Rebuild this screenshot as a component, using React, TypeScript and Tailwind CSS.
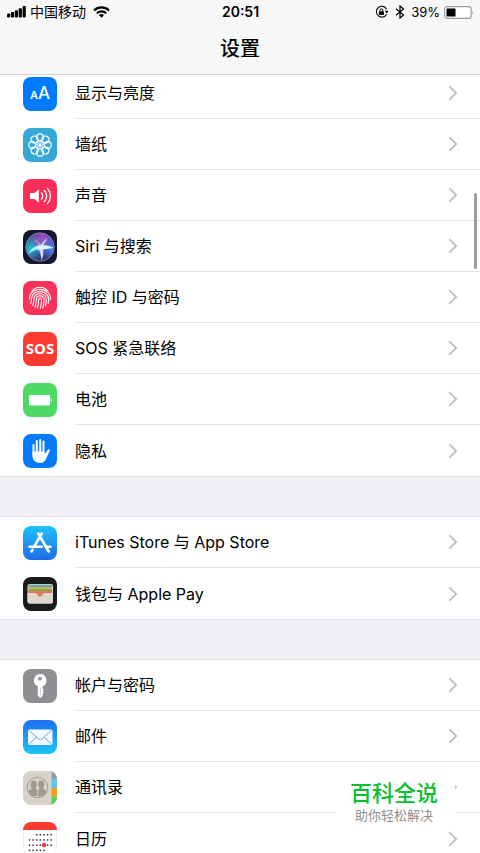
import clsx from "clsx";
import { ReactNode } from "react";

interface SettingItem {
  id: string;
  label: string;
  icon: ReactNode;
}

const tile = "h-[34px] w-[34px] shrink-0 overflow-hidden rounded-lg";

/* ---------- Row icons, all drawn on a 34 x 34 tile ---------- */

function DisplayIcon() {
  return (
    <span
      className={clsx(
        tile,
        "flex items-baseline justify-center bg-[#007aff] leading-8 text-white"
      )}>
      <span className="text-[11px] font-semibold">A</span>
      <span className="text-[17px] font-medium">A</span>
    </span>
  );
}

function WallpaperIcon() {
  const petals = [0, 45, 90, 135, 180, 225, 270, 315];
  return (
    <svg viewBox="0 0 34 34" className={clsx(tile, "bg-[#36a8d6]")} aria-hidden>
      <g fill="none" stroke="#fff">
        {petals.map((deg) => (
          <circle
            key={deg}
            cx="17"
            cy="9.3"
            r="3.5"
            strokeWidth="1.3"
            transform={`rotate(${deg} 17 17)`}
          />
        ))}
        {petals.map((deg) => (
          <path
            key={deg}
            d="M17 15.500V13"
            strokeWidth="1"
            transform={`rotate(${deg} 17 17)`}
          />
        ))}
      </g>
      <circle cx="17" cy="17" r="1.500" fill="#fff" />
    </svg>
  );
}

function SoundIcon() {
  return (
    <svg viewBox="0 0 34 34" className={clsx(tile, "bg-[#fc2d57]")} aria-hidden>
      <path d="M7 14h4.2l4.6-3.6v13.2L11.2 20H7z" fill="#fff" />
      <g fill="none" stroke="#fff" strokeWidth="1.3" strokeLinecap="round">
        <path d="M18.5 13.8c1.5 2 1.5 4.4 0 6.4" />
        <path d="M21.4 11.5c2.7 3.4 2.7 7.6 0 11" />
        <path d="M24.4 9.3c3.9 4.8 3.9 10.6 0 15.4" />
      </g>
    </svg>
  );
}

function SiriIcon() {
  return (
    <svg viewBox="0 0 34 34" className={clsx(tile, "bg-[#15162f]")} aria-hidden>
      <defs>
        <radialGradient id="siri-top" cx="0.6" cy="0.2" r="0.6">
          <stop offset="0" stopColor="#b04fd0" />
          <stop offset="1" stopColor="#b04fd0" stopOpacity="0" />
        </radialGradient>
        <radialGradient id="siri-left" cx="0.15" cy="0.55" r="0.55">
          <stop offset="0" stopColor="#22c4d8" />
          <stop offset="1" stopColor="#22c4d8" stopOpacity="0" />
        </radialGradient>
        <radialGradient id="siri-right" cx="0.9" cy="0.55" r="0.5">
          <stop offset="0" stopColor="#4484ee" />
          <stop offset="1" stopColor="#4484ee" stopOpacity="0" />
        </radialGradient>
        <radialGradient id="siri-core">
          <stop offset="0" stopColor="#fff" />
          <stop offset="1" stopColor="#9ff0ff" stopOpacity="0" />
        </radialGradient>
      </defs>
      <circle cx="17" cy="17" r="14" fill="#33276b" />
      <circle cx="17" cy="17" r="14" fill="url(#siri-top)" />
      <circle cx="17" cy="17" r="14" fill="url(#siri-left)" />
      <circle cx="17" cy="17" r="14" fill="url(#siri-right)" />
      <path d="M17.500 18.500L10.500 9Q17 10.500 19 17Z" fill="#e868cc" opacity="0.7" />
      <path d="M18 19Q9.500 19.500 4.500 25Q9 15.500 17 15.500Z" fill="#a5f5f5" />
      <path d="M16 16.500Q24 13.500 30.500 18Q23 19 17 20Z" fill="#e4f1ff" />
      <path d="M15.500 17Q17.500 22 18.500 30.500Q22 23 19 17Z" fill="#e0d2ff" />
      <path d="M17 17.500Q20 10 24.500 8.500Q21 13 19 18.500Z" fill="#fff" opacity="0.7" />
      <circle cx="17.500" cy="17.600" r="5" fill="url(#siri-core)" />
      <circle cx="17" cy="17" r="14.2" fill="none" stroke="#8b8cb0" strokeWidth="0.9" />
    </svg>
  );
}

function TouchIdIcon() {
  return (
    <svg viewBox="0 0 34 34" className={clsx(tile, "bg-[#fb3159]")} aria-hidden>
      <g fill="none" stroke="#fff" strokeWidth="1.1" strokeLinecap="round">
        <path d="M9 10.2C13.2 5 20.8 5 25 10.2" />
        <path d="M6.6 18.2C6.2 11.6 11 8.4 17 8.4s10.8 3.8 10.4 10.4" />
        <path d="M7.8 22.4c.8-2.2.7-3.4.8-5.2C9 12.800 12.600 10.600 17 10.600s8.300 2.800 8.500 7.200c.1 1.400 0 3-.3 4.600" />
        <path d="M9.800 24.600c1-2.600 1-4.600 1.100-7C11.200 14.400 13.800 12.800 17 12.800s6 2 6.200 5.200c.1 2.200-.1 4.400-.7 6.800" />
        <path d="M12 26.200c1-2.800 1.200-5.600 1.300-8.200.1-2 1.700-3.100 3.700-3.100s3.800 1.200 3.900 3.300c.1 2.800-.2 5.600-1 8.600" />
        <path d="M14.400 27.200c1-3 1.300-6 1.300-8.800 0-1.800 2.800-1.900 2.800 0 0 3-.3 6-1.200 9" />
      </g>
    </svg>
  );
}

function SosIcon() {
  return (
    <span
      className={clsx(
        tile,
        "flex items-center justify-center bg-[#fc3b30] font-['Noto_Sans',sans-serif] text-[15px] font-bold text-white"
      )}>
      SOS
    </span>
  );
}

function BatteryTileIcon() {
  return (
    <svg viewBox="0 0 34 34" className={clsx(tile, "bg-[#4cd964]")} aria-hidden>
      <rect x="6" y="12" width="21" height="10.500" rx="1" fill="#fff" />
      <path d="M27.800 15.200q2.200 2 0 4z" fill="#fff" />
    </svg>
  );
}

function PrivacyIcon() {
  return (
    <svg viewBox="0 0 34 34" className={clsx(tile, "bg-[#047bfb]")} aria-hidden>
      <g stroke="#fff" strokeWidth="2" strokeLinecap="round">
        <path d="M10.500 11v10" />
        <path d="M13.800 7v12" />
        <path d="M17.200 6v12" />
        <path d="M20.500 7.500v12" />
      </g>
      <path
        d="M9.500 17.500h12v3l3.300-4.600c.8-1 2.500-.6 1.900.8l-3.700 8.200c-1 2.300-2.900 4-5.800 4-4.400 0-7.700-2.600-7.700-7.400z"
        fill="#fff"
      />
    </svg>
  );
}

function AppStoreIcon() {
  return (
    <svg viewBox="0 0 34 34" className={tile} aria-hidden>
      <defs>
        <linearGradient id="store-bg" x1="0" y1="0" x2="0" y2="1">
          <stop offset="0" stopColor="#1fc4fa" />
          <stop offset="1" stopColor="#1f6be8" />
        </linearGradient>
      </defs>
      <rect width="34" height="34" fill="url(#store-bg)" />
      <g stroke="#fff" strokeWidth="2.600" strokeLinecap="round">
        <path d="M18.700 7.500L11.300 20.300" />
        <path d="M15.300 7.500L25.700 25.500" />
        <path d="M6.500 20.800h12.300" />
        <path d="M23.500 20.800h4" />
        <path d="M9.500 23.800l-1 1.700" />
      </g>
    </svg>
  );
}

function WalletIcon() {
  return (
    <svg viewBox="0 0 34 34" className={clsx(tile, "bg-[#1b1b1d]")} aria-hidden>
      <rect x="4.500" y="7" width="25.500" height="19.500" rx="2" fill="#ddd8cb" />
      <path d="M5.500 8.500q0-.7.7-.7h22.100q.7 0 .7.700V11h-23.500z" fill="#5fa9b5" />
      <path d="M5.500 10.300h23.500v2.700h-23.500z" fill="#e0b339" />
      <path d="M5.500 12h23.500v2.500h-23.500z" fill="#77ad4c" />
      <path d="M5.500 14h23.500v6h-23.500z" fill="#e0765e" />
      <path
        d="M4.500 16h7.300c1.500 0 1.900.7 2.500 1.700 1.300 2.300 4.100 2.300 5.400 0 .6-1 1-1.700 2.500-1.700H30v8.500q0 2-2 2H6.500q-2 0-2-2z"
        fill="#ddd8cb"
      />
    </svg>
  );
}

function KeyIcon() {
  return (
    <svg viewBox="0 0 34 34" className={clsx(tile, "bg-[#8e8e93]")} aria-hidden>
      <path
        fillRule="evenodd"
        fill="#fff"
        d="M17 5a6.500 6.500 0 0 1 2.600 12.400v2.100l1.300 1.300-1.300 1.400 1.300 1.500-1.300 1.400v1.700L17.500 29l-2.700-2.300v-9.300A6.500 6.500 0 0 1 17 5zm0 2.800a1.900 1.900 0 1 0 0 3.800 1.900 1.900 0 0 0 0-3.800z"
      />
      <path d="M17.300 18.500v8" stroke="#b9b9bd" strokeWidth="0.700" />
    </svg>
  );
}

function MailIcon() {
  return (
    <svg viewBox="0 0 34 34" className={tile} aria-hidden>
      <defs>
        <linearGradient id="mail-bg" x1="0" y1="0" x2="0" y2="1">
          <stop offset="0" stopColor="#1d6ff0" />
          <stop offset="1" stopColor="#1bc6fb" />
        </linearGradient>
      </defs>
      <rect width="34" height="34" fill="url(#mail-bg)" />
      <rect x="5" y="9.500" width="24.500" height="15.500" rx="1.500" fill="#f2fafe" />
      <g fill="none" stroke="#6da4cf" strokeWidth="1">
        <path d="M5.800 10.300l9.700 8.700q1.800 1.400 3.500 0l9.700-8.700" />
        <path d="M6 24.300l7.300-7.100M28.600 24.300l-7.300-7.100" />
      </g>
    </svg>
  );
}

function ContactsIcon() {
  return (
    <svg viewBox="0 0 34 34" className={clsx(tile, "bg-[#d6d2c8]")} aria-hidden>
      <path d="M29 0h5v8h-5z" fill="#9b9b9b" />
      <path d="M29 8h5v9h-5z" fill="#5ac5f0" />
      <path d="M29 17h5v8.500h-5z" fill="#f89a1c" />
      <path d="M29 25.500h5V34h-5z" fill="#55cf50" />
      <path d="M28.500 0v34" stroke="#bcb8ae" strokeWidth="1" />
      <circle cx="14.500" cy="16.500" r="10.300" fill="none" stroke="#9f9b93" strokeWidth="1" />
      <g fill="#9f9b93">
        <path d="M10.800 9.500c2.200 0 3.200 1.700 3 4-.1 1.500-.6 2.600-1.200 3.300 0 1.600 2.300 1.700 2.600 3.700v4.500H9.500c-2-1-3.500-2.500-4.200-4.700 1-1.200 3.500-1.500 3.600-3.300-.8-.8-1.200-2-1.200-3.600 0-2.200 1-3.900 3.100-3.900z" />
        <path d="M18.200 9.500c-2.200 0-3.200 1.700-3 4 .1 1.500.6 2.600 1.200 3.300 0 1.600-1.300 1.700-1.100 3.700l-.5 5.200c3.800 0 7-1.500 8.900-5.400-1-1.200-3.400-1.500-3.600-3.300.8-.8 1.200-2 1.200-3.600 0-2.200-1-3.900-3.100-3.900z" />
      </g>
      <path d="M14.700 17.500v7.500" stroke="#d6d2c8" strokeWidth="0.800" />
    </svg>
  );
}

function CalendarIcon() {
  // [first column, last column] of the dots on each line
  const lines = [
    [2, 6],
    [0, 6],
    [0, 6],
    [0, 4],
  ];
  return (
    <svg viewBox="0 0 34 34" className={clsx(tile, "bg-white")} aria-hidden>
      <rect x="0.500" y="0.500" width="33" height="33" rx="7.500" fill="#fff" stroke="#eeeeee" />
      <path d="M0 0h34v8H0z" fill="#fb3b30" />
      {lines.map(([from, to], row) =>
        Array.from({ length: to - from + 1 }, (_, i) => (
          <rect
            key={`${row}-${i}`}
            x={5.800 + (from + i) * 3.600}
            y={12 + row * 5.200}
            width="1.500"
            height="1.500"
            fill="#333"
          />
        ))
      )}
      <circle cx="21" cy="23" r="2.200" fill="#f5333f" />
    </svg>
  );
}

/* ---------- Data ---------- */

const groups: SettingItem[][] = [
  [
    { id: "display", label: "显示与亮度", icon: <DisplayIcon /> },
    { id: "wallpaper", label: "墙纸", icon: <WallpaperIcon /> },
    { id: "sounds", label: "声音", icon: <SoundIcon /> },
    { id: "siri", label: "Siri 与搜索", icon: <SiriIcon /> },
    { id: "touch-id", label: "触控 ID 与密码", icon: <TouchIdIcon /> },
    { id: "sos", label: "SOS 紧急联络", icon: <SosIcon /> },
    { id: "battery", label: "电池", icon: <BatteryTileIcon /> },
    { id: "privacy", label: "隐私", icon: <PrivacyIcon /> },
  ],
  [
    { id: "store", label: "iTunes Store 与 App Store", icon: <AppStoreIcon /> },
    { id: "wallet", label: "钱包与 Apple Pay", icon: <WalletIcon /> },
  ],
  [
    { id: "accounts", label: "帐户与密码", icon: <KeyIcon /> },
    { id: "mail", label: "邮件", icon: <MailIcon /> },
    { id: "contacts", label: "通讯录", icon: <ContactsIcon /> },
    { id: "calendar", label: "日历", icon: <CalendarIcon /> },
  ],
];

/* ---------- Layout pieces ---------- */

function StatusBar() {
  return (
    <div className="grid h-6 grid-cols-[1fr_auto_1fr] items-center pl-[7px] pr-1.5 text-sm leading-6">
      <div className="flex items-center">
        <svg width="19" height="12" viewBox="0 0 19 12" aria-hidden>
          <rect x="0" y="7.500" width="3.200" height="4" rx="1" />
          <rect x="3.900" y="6" width="3.200" height="5.500" rx="1" />
          <rect x="7.800" y="4.200" width="3.200" height="7.300" rx="1" />
          <rect x="11.700" y="2.200" width="3.200" height="9.300" rx="1" />
          <rect x="15.600" y="0" width="3.200" height="11.500" rx="1" />
        </svg>
        <span className="ml-1">中国移动</span>
        <svg className="ml-[7px]" width="17" height="12" viewBox="0 0 17 12" aria-hidden>
          <path d="M8.500 11.800L5.900 9.100a3.800 3.800 0 0 1 5.200 0z" />
          <g fill="none" stroke="#000" strokeWidth="2.100">
            <path d="M3.800 7.300a6.800 6.800 0 0 1 9.400 0" />
            <path d="M1 4.400a10.800 10.800 0 0 1 15 0" />
          </g>
        </svg>
      </div>
      <span className="font-semibold">20:51</span>
      <div className="flex items-center justify-end">
        <svg width="14" height="14" viewBox="0 0 14 14" aria-hidden>
          <path
            d="M11.600 4.200A5.400 5.400 0 1 0 11.600 9.200"
            fill="none"
            stroke="#000"
            strokeWidth="1.100"
          />
          <path d="M9.800 5.800h3.900l-2 2.800z" />
          <rect x="3.900" y="6.200" width="5" height="3.800" rx="0.500" />
          <path d="M5 6.400V5.200a1.400 1.400 0 0 1 2.800 0v1.200" fill="none" stroke="#000" />
        </svg>
        <svg className="ml-1.5" width="10" height="14" viewBox="0 0 10 14" aria-hidden>
          <path
            d="M1 3.800l7.500 6.200L5 13V1l3.500 3L1 10.200"
            fill="none"
            stroke="#000"
            strokeWidth="1.200"
          />
        </svg>
        <span className="ml-1.5 text-[13px]">39%</span>
        <svg className="ml-1" width="30" height="13" viewBox="0 0 30 13" aria-hidden>
          <rect x="0.600" y="0.600" width="26.500" height="11.800" rx="2.500" fill="#fff" stroke="#9b9b9b" strokeWidth="1.200" />
          <rect x="2.500" y="2.500" width="9" height="8" rx="0.500" />
          <path d="M28.300 4.500q1.500 2 0 4z" fill="#9b9b9b" />
        </svg>
      </div>
    </div>
  );
}

function SettingRow({ item, last }: { item: SettingItem; last: boolean }) {
  return (
    <li>
      <a href={`#${item.id}`} className="flex h-[51px] items-stretch pl-[23px]">
        <span className="flex items-center">{item.icon}</span>
        <span
          className={clsx(
            "ml-[18px] flex flex-1 items-center justify-between pr-[22px]",
            !last && "border-b border-[#e3e3e5]"
          )}>
          <span>{item.label}</span>
          <svg width="10" height="16" viewBox="0 0 10 16" aria-hidden>
            <path d="M1.200 1.200L8.200 8l-7 6.800" fill="none" stroke="#c4c4c8" strokeWidth="2" />
          </svg>
        </span>
      </a>
    </li>
  );
}

export default function App() {
  return (
    <div className="relative flex h-screen flex-col overflow-hidden bg-[#efeff4] font-['Inter','Noto_Sans_CJK_SC',sans-serif] text-base text-black">
      <header className="relative z-10 shrink-0 border-b border-[#cfcfd2] bg-[#f7f7f8]">
        <StatusBar />
        <h1 className="text-center text-xl leading-[50px] font-medium">设置</h1>
      </header>

      {/* The list is scrolled, so its first row starts under the header */}
      <main className="-mt-[7px] flex flex-col gap-[41px]">
        {groups.map((group) => (
          <ul key={group[0].id} className="bg-white outline outline-[#dfdfe3]">
            {group.map((item, i) => (
              <SettingRow key={item.id} item={item} last={i === group.length - 1} />
            ))}
          </ul>
        ))}
      </main>

      <div className="absolute top-[193px] right-[3px] h-[76px] w-[3px] rounded-full bg-[#9d9d9f]" />

      <div className="absolute right-[25px] bottom-6 w-[120px] bg-white pr-0.5 pb-1.5 text-center">
        <p className="text-[22px] leading-7 font-medium text-[#0abf2b]">百科全说</p>
        <p className="text-[13px] leading-4 text-[#8f8f8f]">助你轻松解决</p>
      </div>
    </div>
  );
}
